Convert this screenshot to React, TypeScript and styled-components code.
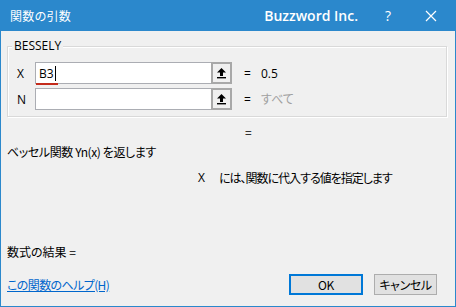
import React from "react";
import styled, { createGlobalStyle } from "styled-components";

const GlobalStyle = createGlobalStyle`
  html, body {
    margin: 0;
    padding: 0;
    background: #f0f0f0;
  }
  body {
    font-family: "Noto Sans CJK JP", "Noto Sans", sans-serif;
    font-feature-settings: "palt";
  }
`;

const args = [
  { id: 1, label: "X", value: "B3", result: "0.5", muted: false, marked: true },
  { id: 2, label: "N", value: "", result: "すべて", muted: true, marked: false },
];

const ArrowIcon = () => (
  <svg width="11" height="12" viewBox="0 0 11 12">
    <path d="M5.5 1 L10 5.5 L7 5.5 L7 9 L4 9 L4 5.5 L1 5.5 Z" fill="#000" />
    <rect x="1" y="10" width="9" height="1.4" fill="#000" />
  </svg>
);

const App = () => {
  return (
    <>
      <GlobalStyle />
      <Window>
        <TitleBar>
          <TitleText>関数の引数</TitleText>
          <Brand>Buzzword Inc.</Brand>
          <TitleButton>?</TitleButton>
          <CloseButton>
            <svg width="12" height="12" viewBox="0 0 12 12">
              <path d="M1 1 L11 11 M11 1 L1 11" stroke="#fff" strokeWidth="1.2" />
            </svg>
          </CloseButton>
        </TitleBar>
        <Body>
          <Group>
            <Legend>BESSELY</Legend>
            {args.map((a) => (
              <ArgRow key={a.id}>
                <ArgLabel>{a.label}</ArgLabel>
                <InputBox>
                  <InputText>
                    {a.value}
                    {a.marked && <Caret />}
                  </InputText>
                  {a.marked && <Squiggle />}
                </InputBox>
                <RefButton>
                  <ArrowIcon />
                </RefButton>
                <Equals>=</Equals>
                <ArgValue muted={a.muted}>{a.result}</ArgValue>
              </ArgRow>
            ))}
          </Group>
          <TotalEq>=</TotalEq>
          <Description>ベッセル関数 Yn(x) を返します</Description>
          <ArgHelp>
            <ArgHelpName>X</ArgHelpName>
            <ArgHelpText>には、関数に代入する値を指定します</ArgHelpText>
          </ArgHelp>
          <ResultLine>数式の結果 =</ResultLine>
          <Footer>
            <HelpLink>この関数のヘルプ(H)</HelpLink>
            <Buttons>
              <DialogButton primary>OK</DialogButton>
              <DialogButton>キャンセル</DialogButton>
            </Buttons>
          </Footer>
        </Body>
      </Window>
    </>
  );
};

export default App;

const Window = styled.div`
  width: 456px;
  height: 307px;
  box-sizing: border-box;
  border: 1px solid #2b88cc;
  border-top: none;
  background: #f0f0f0;
  display: flex;
  flex-direction: column;
  overflow: hidden;
`;

const TitleBar = styled.div`
  height: 31px;
  margin: 0 -1px;
  background: #2b88cc;
  display: flex;
  align-items: center;
  color: #fff;
  padding-left: 10px;
`;

const TitleText = styled.div`
  font-size: 12px;
  flex: 1;
  letter-spacing: 0.3px;
`;

const Brand = styled.div`
  font-family: "Open Sans", "Noto Sans", sans-serif;
  font-weight: 600;
  font-size: 14px;
  margin-right: 27px;
`;

const TitleButton = styled.div`
  font-family: "Open Sans", sans-serif;
  font-size: 14px;
  width: 20px;
  margin-right: 20px;
`;

const CloseButton = styled.div`
  width: 20px;
  margin-right: 11px;
  display: flex;
  align-items: center;
`;

const Body = styled.div`
  flex: 1;
  padding: 0 6px 0 6px;
  display: flex;
  flex-direction: column;
  font-size: 12px;
  color: #000;
`;

const Group = styled.div`
  position: relative;
  margin-top: 15px;
  height: 71px;
  width: 440px;
  box-sizing: border-box;
  border: 1px solid #d9d9d9;
  box-shadow: inset 1px 1px 0 #fff, 1px 1px 0 #fff;
  padding: 15px 0 0 9px;
  display: flex;
  flex-direction: column;
  gap: 4px;
`;

const Legend = styled.div`
  position: absolute;
  top: -10px;
  left: 4px;
  padding: 0 2px;
  background: #f0f0f0;
  font-family: "Open Sans", "Noto Sans", sans-serif;
  font-size: 12px;
  line-height: 18px;
`;

const ArgRow = styled.div`
  display: flex;
  align-items: center;
  height: 22px;
`;

const ArgLabel = styled.div`
  width: 18px;
  font-family: "Open Sans", sans-serif;
  font-size: 12px;
`;

const InputBox = styled.div`
  position: relative;
  width: 176px;
  height: 22px;
  box-sizing: border-box;
  background: #fff;
  border: 1px solid #abadb3;
  border-right: none;
  display: flex;
  align-items: center;
  padding-left: 3px;
`;

const InputText = styled.span`
  font-family: "Open Sans", sans-serif;
  font-size: 12px;
  display: flex;
  align-items: center;
`;

const Caret = styled.span`
  display: inline-block;
  width: 1px;
  height: 15px;
  background: #000;
  margin-left: 1px;
`;

const Squiggle = styled.span`
  position: absolute;
  left: 0;
  bottom: -2px;
  width: 22px;
  height: 2px;
  background: #c42b1c;
`;

const RefButton = styled.div`
  width: 21px;
  height: 22px;
  box-sizing: border-box;
  border: 2px solid #a8a8a8;
  background: #f0f0f0;
  display: flex;
  align-items: center;
  justify-content: center;
`;

const Equals = styled.div`
  margin-left: 12px;
  width: 17px;
  font-family: "Open Sans", sans-serif;
`;

const ArgValue = styled.div<{ muted?: boolean }>`
  font-family: "Open Sans", "Noto Sans CJK JP", sans-serif;
  color: ${(p) => (p.muted ? "#a0a0a0" : "#000")};
`;

const TotalEq = styled.div`
  margin-top: 6px;
  margin-left: 238px;
  line-height: 18px;
`;

const Description = styled.div`
  margin-top: 2px;
  line-height: 18px;
  letter-spacing: -0.4px;
`;

const ArgHelp = styled.div`
  margin-top: 8px;
  margin-left: 191px;
  line-height: 18px;
  display: flex;
`;

const ArgHelpName = styled.span`
  font-family: "Open Sans", sans-serif;
  width: 21px;
`;

const ArgHelpText = styled.span`
  letter-spacing: -1px;
`;

const ResultLine = styled.div`
  margin-top: 56px;
  line-height: 18px;
`;

const Footer = styled.div`
  margin-top: 13px;
  display: flex;
  align-items: center;
  justify-content: space-between;
  padding-right: 12px;
`;

const HelpLink = styled.a`
  color: #0066cc;
  text-decoration: underline;
  font-size: 12px;
  letter-spacing: -0.6px;
  cursor: pointer;
`;

const Buttons = styled.div`
  display: flex;
  gap: 11px;
`;

const DialogButton = styled.button<{ primary?: boolean }>`
  width: 74px;
  height: 21px;
  box-sizing: border-box;
  background: #e1e1e1;
  border: ${(p) => (p.primary ? "2px solid #0078d7" : "1px solid #adadad")};
  font-family: "Noto Sans CJK JP", "Open Sans", sans-serif;
  font-feature-settings: "palt";
  font-size: 12px;
  letter-spacing: -0.4px;
  color: #000;
  padding: 0;
  &:last-child {
    width: 63px;
  }
`;
